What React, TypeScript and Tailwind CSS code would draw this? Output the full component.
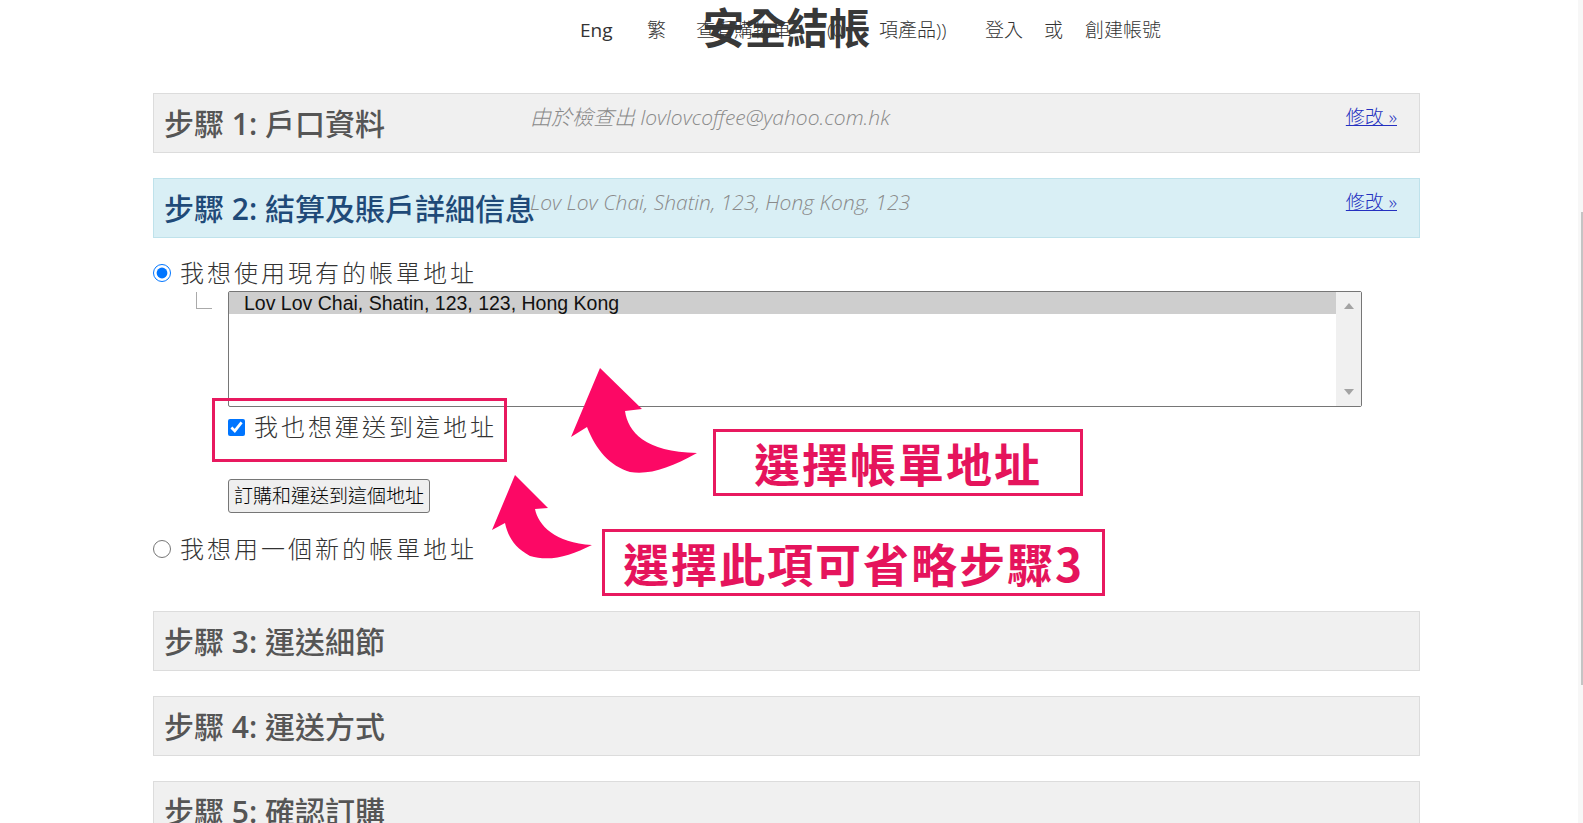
import clsx from 'clsx';

const SANS = "font-['Open_Sans','Noto_Sans_CJK_TC',sans-serif]";
const ARIAL = "font-['Liberation_Sans','Noto_Sans_CJK_TC',sans-serif]";

interface StepBoxProps {
    num: number;
    title: string;
    note?: string;
    active?: boolean;
    edit?: boolean;
}

function StepBox({ num, title, note, active, edit }: StepBoxProps) {
    return (
        <div
            className={clsx(
                'h-[60px] border flex items-start pl-[10px] pr-[22px]',
                active ? 'bg-[#d9eff5] border-[#bfe2eb]' : 'bg-[#f0f0f0] border-[#dcdcdc]'
            )}
        >
            <div
                className={clsx(
                    'w-[366px] shrink-0 h-full flex items-center whitespace-nowrap text-[30px] font-medium',
                    active ? 'text-[#1f4a78]' : 'text-[#555]'
                )}
            >
                步驟<span className="font-semibold">&nbsp;{num}:&nbsp;</span>{title}
            </div>
            {note && (
                <div className="pt-[9px] text-[21px] leading-[28px] italic font-light text-[#8a8a8a] whitespace-nowrap">
                    {note}
                </div>
            )}
            {edit && (
                <a href="#" className="ml-auto pt-[9px] text-[19px] leading-[28px] font-light text-[#2430c0] underline whitespace-nowrap">
                    修改 »
                </a>
            )}
        </div>
    );
}

export default function App() {
    return (
        <div className={clsx('relative flex w-full min-h-[823px] bg-white overflow-hidden', SANS)}>
            <div className="flex-1">
                <div className="ml-[153px] w-[1267px]">
                    {/* Header */}
                    <div className="relative h-[93px]">
                        <h1 className="pt-[3px] text-center text-[42px] leading-[50px] font-bold text-[#383838]">安全結帳</h1>
                        <div className="absolute top-[16px] left-[427px] flex items-center text-[19px] leading-[28px] text-[#333] whitespace-nowrap">
                            <span className="inline-block w-[67px]">Eng</span>
                            <span className="inline-block w-[49px] font-light">繁</span>
                            <span className="inline-block w-[289px] font-light">
                                <span className="inline-block w-[131px]">查看購物車</span>
                                <span className="inline-block w-[52px]">(0</span>
                                <span>項產品))</span>
                            </span>
                            <span className="inline-block w-[59px] font-light">登入</span>
                            <span className="inline-block w-[41px] font-light">或</span>
                            <span className="font-light">創建帳號</span>
                        </div>
                    </div>

                    <StepBox num={1} title="戶口資料" note="由於檢查出 lovlovcoffee@yahoo.com.hk" edit />
                    <div className="mt-[25px]">
                        <StepBox num={2} title="結算及賬戶詳細信息" note="Lov Lov Chai, Shatin, 123, Hong Kong, 123" active edit />
                    </div>

                    {/* Billing address */}
                    <div className="pt-[20px] text-[#333]">
                        <label className="flex items-center h-[30px]">
                            <input type="radio" name="billing" defaultChecked className="m-0 w-[18px] h-[18px]" />
                            <span className="ml-[9px] text-[24px] leading-[30px] tracking-[3px] font-light">我想使用現有的帳單地址</span>
                        </label>

                        <div className="mt-[3px] flex">
                            <div className="w-[75px] shrink-0">
                                <div className="ml-[43px] mt-[1px] w-[16px] h-[17px] border-l border-b border-[#aaa]" />
                            </div>
                            <div className="w-[1134px] h-[116px] border border-[#767676] rounded-[2px] flex bg-white">
                                <div className="flex-1">
                                    <div className={clsx('h-[22px] bg-[#cecece] pl-[15px] text-[19.5px] leading-[22px] text-[#111]', ARIAL)}>
                                        Lov Lov Chai, Shatin, 123, 123, Hong Kong
                                    </div>
                                </div>
                                <div className="w-[25px] bg-[#f0f0f0] flex flex-col items-center justify-between py-[11px]">
                                    <svg width="10" height="6" viewBox="0 0 10 6"><path d="M5 0 L10 6 L0 6 Z" fill="#a3a3a3" /></svg>
                                    <svg width="10" height="6" viewBox="0 0 10 6"><path d="M0 0 L10 0 L5 6 Z" fill="#a3a3a3" /></svg>
                                </div>
                            </div>
                        </div>

                        <label className="mt-[5px] pl-[75px] flex items-center h-[30px]">
                            <input type="checkbox" defaultChecked className="m-0 w-[17px] h-[17px]" />
                            <span className="ml-[9px] text-[24px] leading-[30px] tracking-[3px] font-light">我也想運送到這地址</span>
                        </label>

                        <button className="mt-[37px] ml-[75px] w-[202px] h-[34px] bg-[#efefef] border border-[#767676] rounded-[3px] text-[19px] leading-none font-light text-black">
                            訂購和運送到這個地址
                        </button>

                        <label className="mt-[21px] flex items-center h-[30px]">
                            <input type="radio" name="billing" className="m-0 w-[18px] h-[18px]" />
                            <span className="ml-[9px] text-[24px] leading-[30px] tracking-[3px] font-light">我想用一個新的帳單地址</span>
                        </label>
                    </div>

                    <div className="mt-[47px] space-y-[25px]">
                        <StepBox num={3} title="運送細節" />
                        <StepBox num={4} title="運送方式" />
                        <StepBox num={5} title="確認訂購" />
                    </div>
                </div>
            </div>

            {/* page scrollbar */}
            <div className="w-[5px] shrink-0 bg-[#f7f7f7]">
                <div className="mt-[212px] ml-auto w-[2px] h-[473px] bg-[#c4c4c4]" />
            </div>

            {/* annotations drawn over the screenshot */}
            <div className="absolute left-[212px] top-[398px] w-[295px] h-[64px] border-[3px] border-[#e8195f]" />
            <div className="absolute left-[713px] top-[429px] w-[370px] h-[67px] border-[3px] border-[#e8195f] bg-white flex items-center justify-center text-[46px] font-bold tracking-[2px] text-[#e5145c] font-['Noto_Sans_CJK_TC',sans-serif]">
                選擇帳單地址
            </div>
            <div className="absolute left-[602px] top-[529px] w-[503px] h-[67px] border-[3px] border-[#e8195f] bg-white flex items-center justify-center text-[46px] font-bold tracking-[2px] text-[#e5145c] font-['Noto_Sans_CJK_TC',sans-serif]">
                選擇此項可省略步驟3
            </div>
            <svg className="absolute left-0 top-0 pointer-events-none" width="1583" height="823" viewBox="0 0 1583 823">
                <path
                    d="M600 368 L642 409 L625 411 C628 432 645 452 697 453 C670 468 650 475 630 472 C610 466 596 450 587 427 L571 437 Z"
                    fill="#fc0865"
                />
                <path
                    d="M515 475 L548 508 L535 509 C538 525 555 543 592 545 C570 556 550 562 530 556 C515 548 508 537 505 523 L492 530 Z"
                    fill="#fc0865"
                />
            </svg>
        </div>
    );
}
